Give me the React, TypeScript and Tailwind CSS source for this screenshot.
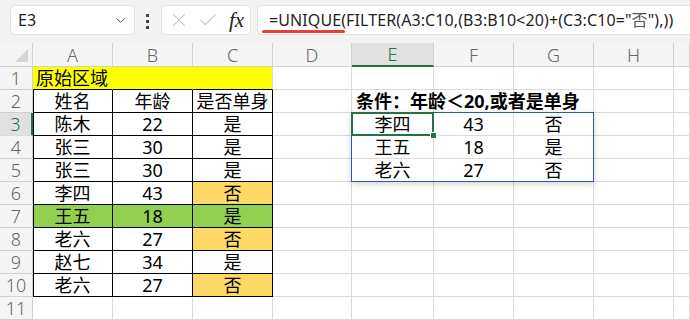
import { ChevronDown, X, Check } from "lucide-react";

type Cell = { t?: string; fill?: "yellow" | "orange" | "green"; left?: boolean; bold?: boolean };

const COLS = ["A", "B", "C", "D", "E", "F", "G", "H", ""];

const DATA: Record<number, Cell[]> = {
  1: [{ t: "原始区域", fill: "yellow", left: true }, { fill: "yellow" }, { fill: "yellow" }],
  2: [{ t: "姓名" }, { t: "年龄" }, { t: "是否单身" }, {}, { t: "条件：年龄＜20,或者是单身", left: true, bold: true }],
  3: [{ t: "陈木" }, { t: "22" }, { t: "是" }, {}, { t: "李四" }, { t: "43" }, { t: "否" }],
  4: [{ t: "张三" }, { t: "30" }, { t: "是" }, {}, { t: "王五" }, { t: "18" }, { t: "是" }],
  5: [{ t: "张三" }, { t: "30" }, { t: "是" }, {}, { t: "老六" }, { t: "27" }, { t: "否" }],
  6: [{ t: "李四" }, { t: "43" }, { t: "否", fill: "orange" }],
  7: [{ t: "王五", fill: "green" }, { t: "18", fill: "green" }, { t: "是", fill: "green" }],
  8: [{ t: "老六" }, { t: "27" }, { t: "否", fill: "orange" }],
  9: [{ t: "赵七" }, { t: "34" }, { t: "是" }],
  10: [{ t: "老六" }, { t: "27" }, { t: "否", fill: "orange" }],
  11: [],
};

function borderClass(r: number, c: number) {
  if (r >= 2 && r <= 10 && c <= 2) {
    return c === 0
      ? "border-r border-b border-black shadow-[inset_1px_0_0_#000]"
      : "border-r border-b border-black";
  }
  if (r === 1 && c < 2) return "border-r border-b border-r-[#ffff00] border-b-black";
  if (r === 1 && c === 2) return "border-r border-b border-r-[#dadada] border-b-black";
  return "border-r border-b border-[#dadada]";
}

function fillClass(fill?: Cell["fill"]) {
  if (fill === "yellow") return "bg-[#ffff00]";
  if (fill === "orange") return "bg-[#ffd966]";
  if (fill === "green") return "bg-[#92d050]";
  return "bg-white";
}

function TopBar() {
  return (
    <div className="flex items-start h-[43px] bg-[#f3f3f3] pt-[5px] pl-[10px]">
      {/* name box */}
      <div className="flex items-center justify-between w-[125px] h-[30px] rounded-[5px] border border-[#e2e2e2] bg-white pl-[7px] pr-[6px]">
        <span className="text-[16px] text-[#1f1f1f]">E3</span>
        <ChevronDown size={15} strokeWidth={1.5} className="text-[#444]" />
      </div>

      {/* dots */}
      <div className="flex flex-col gap-[3px] ml-[11px] mt-[9px]">
        <span className="w-[3px] h-[3px] bg-[#444]" />
        <span className="w-[3px] h-[3px] bg-[#444]" />
        <span className="w-[3px] h-[3px] bg-[#444]" />
      </div>

      {/* cancel / enter / fx */}
      <div className="flex items-center w-[90px] h-[30px] ml-[12px] rounded-[5px] border border-[#e2e2e2] bg-white pl-[6px]">
        <X size={22} strokeWidth={1.1} className="text-[#bdbdbd]" />
        <Check size={22} strokeWidth={1.1} className="text-[#bdbdbd] ml-[7px]" />
        <span className="ml-[10px] text-[21px] italic font-['Liberation_Serif',serif] text-[#222] leading-none">
          fx
        </span>
      </div>

      {/* formula input */}
      <div className="relative flex items-center flex-1 h-[30px] ml-[6px] rounded-l-[5px] border border-r-0 border-[#e2e2e2] bg-white pl-[11px]">
        <span className="text-[16px] text-[#1f1f1f] whitespace-nowrap tracking-[0.1px]">
          =UNIQUE(FILTER(A3:C10,(B3:B10&lt;20)+(C3:C10="<span className="text-[#555]">否</span>"),))
        </span>
        <span className="absolute left-[4px] top-[24px] w-[83px] h-[3px] rounded-full bg-[#e5413b]" />
      </div>
    </div>
  );
}

export default function App() {
  return (
    <div className="w-[690px] h-[320px] overflow-hidden bg-white font-['Noto_Sans','Noto_Sans_CJK_SC',sans-serif]">
      <TopBar />

      <div className="grid grid-cols-[33px_80px_80px_80px_79px_82px_80px_80px_80px_16px] grid-rows-[24px_repeat(11,23px)] text-[18px] leading-none">
        {/* corner */}
        <div className="relative bg-[#f5f5f5] border-r border-b border-[#d0d0d0]">
          <svg className="absolute right-[4px] bottom-[4px]" width="13" height="13" viewBox="0 0 13 13">
            <polygon points="13,0 13,13 0,13" fill="#d6d6d6" />
          </svg>
        </div>

        {/* column headers */}
        {COLS.map((c) =>
          c === "E" ? (
            <div
              key={c}
              className="flex items-center justify-center bg-[#e1e1e1] text-[#217346] border-r border-[#d0d0d0] border-b-2 border-b-[#217346] font-light"
            >
              {c}
            </div>
          ) : (
            <div
              key={c || "x"}
              className="flex items-center justify-center bg-[#f5f5f5] text-[#666] border-r border-b border-[#d0d0d0] font-light"
            >
              {c}
            </div>
          )
        )}

        {/* rows */}
        {Array.from({ length: 11 }, (_, i) => i + 1).map((r) => (
          <Row key={r} r={r} />
        ))}
      </div>
    </div>
  );
}

function Row({ r }: { r: number }) {
  const cells = DATA[r] || [];
  return (
    <>
      {r === 3 ? (
        <div className="flex items-center justify-center bg-[#e1e1e1] text-[#217346] border-b border-[#dadada] border-r-2 border-r-[#217346] font-light">
          {r}
        </div>
      ) : (
        <div className="flex items-center justify-center bg-[#f5f5f5] text-[#666] border-r border-b border-[#d0d0d0] font-light">
          {r}
        </div>
      )}
      {COLS.map((_, c) => {
        const cell = cells[c] || {};
        const isE3 = r === 3 && c === 4;
        return (
          <div
            key={c}
            className={`relative flex items-center text-black ${borderClass(r, c)} ${fillClass(cell.fill)} ${
              cell.left ? "justify-start pl-[3px] whitespace-nowrap overflow-visible z-[1]" : "justify-center"
            } ${cell.bold ? "font-bold pl-[4px]" : ""}`}
          >
            {cell.t}
            {isE3 && (
              <>
                {/* spill range */}
                <div className="absolute -left-px -top-px w-[243px] h-[70px] border border-[#2f5b9a] shadow-[0_2px_7px_rgba(0,0,0,0.18)] pointer-events-none z-10" />
                {/* active cell */}
                <div className="absolute -left-px -top-px w-[83px] h-[24px] border-2 border-[#217346] pointer-events-none z-20" />
                <div className="absolute -right-[4px] -bottom-[4px] w-[7px] h-[7px] bg-[#217346] border border-white z-30" />
              </>
            )}
          </div>
        );
      })}
    </>
  );
}
